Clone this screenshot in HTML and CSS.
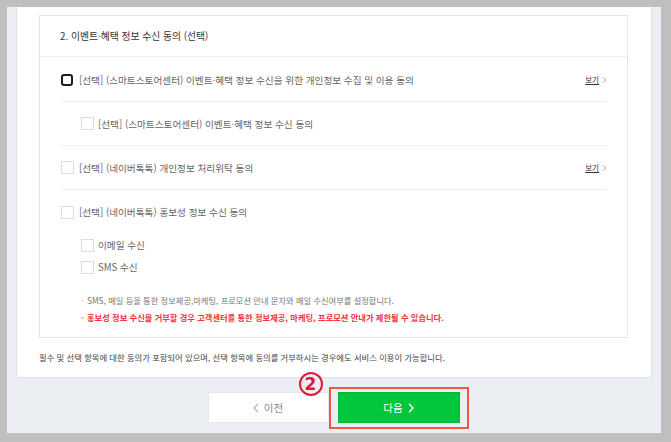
FILE: index.html
```html
<!DOCTYPE html>
<html lang="ko">
<head>
<meta charset="utf-8">
<link rel="stylesheet" href="styles.css">
</head>
<body>
<div class="frame">
  <div class="panel">
    <div class="box">
      <div class="box-head">2. 이벤트·혜택 정보 수신 동의 (선택)</div>
      <div class="list">
        <div class="row">
          <span class="chk chk-focus"></span>
          <span class="label">[선택] (스마트스토어센터) 이벤트·혜택 정보 수신을 위한 개인정보 수집 및 이용 동의</span>
          <a class="view">보기<svg width="4" height="6" viewBox="0 0 4 6"><path d="M0.5 0.5 L3 3 L0.5 5.5" fill="none" stroke="#aaa" stroke-width="1"/></svg></a>
        </div>
        <div class="row row-sub">
          <span class="chk"></span>
          <span class="label">[선택] (스마트스토어센터) 이벤트·혜택 정보 수신 동의</span>
        </div>
        <div class="row">
          <span class="chk"></span>
          <span class="label">[선택] (네이버톡톡) 개인정보 처리위탁 동의</span>
          <a class="view">보기<svg width="4" height="6" viewBox="0 0 4 6"><path d="M0.5 0.5 L3 3 L0.5 5.5" fill="none" stroke="#aaa" stroke-width="1"/></svg></a>
        </div>
        <div class="row row-last">
          <span class="chk"></span>
          <span class="label">[선택] (네이버톡톡) 홍보성 정보 수신 동의</span>
        </div>
        <div class="subitem"><span class="chk"></span><span class="label">이메일 수신</span></div>
        <div class="subitem"><span class="chk"></span><span class="label">SMS 수신</span></div>
        <ul class="notes">
          <li>SMS, 메일 등을 통한 정보제공,마케팅, 프로모션 안내 문자와 메일 수신여부를 설정합니다.</li>
          <li class="warn">홍보성 정보 수신을 거부할 경우 고객센터를 통한 정보제공, 마케팅, 프로모션 안내가 제한될 수 있습니다.</li>
        </ul>
      </div>
    </div>
    <p class="footer-note">필수 및 선택 항목에 대한 동의가 포함되어 있으며, 선택 항목에 동의를 거부하시는 경우에도 서비스 이용이 가능합니다.</p>
  </div>
  <div class="buttons">
    <button class="btn btn-prev"><svg width="6" height="10" viewBox="0 0 6 10"><path d="M5 0.8 L1 5 L5 9.2" fill="none" stroke="#aaa" stroke-width="1.1"/></svg>이전</button>
    <div class="next-wrap">
      <button class="btn btn-next">다음<svg width="6" height="10" viewBox="0 0 6 10"><path d="M1 0.8 L5 5 L1 9.2" fill="none" stroke="#fff" stroke-width="1.3"/></svg></button>
      <span class="highlight"></span>
      <span class="step">2</span>
    </div>
  </div>
</div>
</body>
</html>
```
FILE: styles.css
```css
html, body {
  margin: 0;
  padding: 0;
}
body {
  background: #bfbfbf;
  width: 671px;
  height: 442px;
  overflow: hidden;
  font-family: "Noto Sans CJK KR", "Noto Sans", sans-serif;
  color: #666;
}
.frame {
  margin: 7px 10px 0 7px;
  height: 426px;
  background: #ebeef3;
  display: flex;
  flex-direction: column;
}
.panel {
  margin: 0 9px;
  background: #fff;
  border: 1px solid #dfe2e8;
  border-top: none;
  padding: 8px 23px 0 22px;
}
.box {
  border: 1px solid #e3e5ea;
  padding-bottom: 11px;
}
.box-head {
  height: 40px;
  line-height: 40px;
  border-bottom: 1px solid #eceef1;
  padding-left: 20px;
  font-size: 9.8px;
  color: #333;
}
.list {
  padding: 1px 20px 0 21px;
}
.row {
  height: 44px;
  box-sizing: border-box;
  display: flex;
  align-items: center;
  border-bottom: 1px solid #eeeff2;
}
.row-sub {
  padding-left: 20px;
}
.row-last {
  border-bottom: none;
}
.chk {
  width: 13px;
  height: 13px;
  box-sizing: border-box;
  border: 1px solid #dcdcdc;
  background: #fff;
  flex: none;
  margin-right: 5px;
}
.row-sub .chk, .subitem .chk {
  margin-right: 4px;
}
.chk-focus {
  width: 12px;
  height: 12px;
  border: 2px solid #1e1e1e;
  border-radius: 3px;
  margin-right: 6px;
}
.label {
  font-size: 9.65px;
  color: #666;
  white-space: nowrap;
}
.view {
  margin-left: auto;
  font-size: 7.5px;
  color: #333;
  text-decoration: underline;
  display: flex;
  align-items: center;
  gap: 4px;
}
.subitem {
  height: 22px;
  display: flex;
  align-items: center;
  padding-left: 20px;
}
.notes {
  list-style: none;
  margin: 14px 0 0;
  padding: 0 0 0 20px;
}
.notes li {
  font-size: 8.25px;
  line-height: 17px;
  color: #777;
  white-space: nowrap;
}
.notes li::before {
  content: "·";
  display: inline-block;
  width: 6px;
  color: #999;
}
.notes .warn {
  color: #f5333f;
  font-weight: bold;
}
.footer-note {
  margin: 0;
  padding: 12px 0 13px;
  font-size: 8.3px;
  line-height: 14px;
  color: #444;
  white-space: nowrap;
}
.buttons {
  margin-top: 14px;
  display: flex;
  justify-content: center;
  gap: 9px;
  padding-right: 1px;
}
.btn {
  width: 121px;
  height: 31px;
  box-sizing: border-box;
  font-family: inherit;
  font-size: 10.5px;
  display: flex;
  align-items: center;
  justify-content: center;
  gap: 5px;
  cursor: pointer;
  padding: 0;
}
.btn-prev {
  background: #fff;
  border: 1px solid #e6e8ec;
  color: #888;
}
.btn-next {
  background: #00c73c;
  border: 1px solid #0db53f;
  color: #fff;
  width: 122px;
}
.next-wrap {
  position: relative;
}
.highlight {
  position: absolute;
  left: -9px;
  top: -5px;
  right: -9px;
  bottom: -6px;
  border: 2px solid #f0593d;
}
.step {
  position: absolute;
  left: -39px;
  top: -20px;
  width: 24px;
  height: 24px;
  box-sizing: border-box;
  border: 2px solid #e5163c;
  border-radius: 50%;
  color: #e5163c;
  font-family: "DejaVu Sans", sans-serif;
  font-weight: bold;
  font-size: 17px;
  line-height: 20px;
  text-align: center;
  background: #ebeef3;
}
```
